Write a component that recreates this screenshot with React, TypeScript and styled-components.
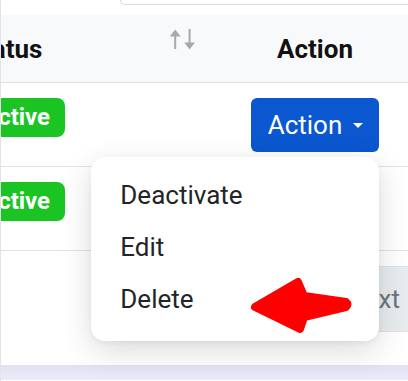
import { FC } from "react";
import styled, { createGlobalStyle } from "styled-components";

const GlobalStyle = createGlobalStyle`
  body {
    margin: 0;
    background: #ffffff;
    font-family: Roboto, "Liberation Sans", sans-serif;
  }
`;

const Frame = styled.div`
  position: relative;
  width: 408px;
  height: 381px;
  overflow: hidden;
  background: #ffffff;
  border-left: 1px solid #e3e3e3;
  box-sizing: border-box;
`;

const TopStrip = styled.div`
  height: 15px;
`;

const SearchEdge = styled.div`
  margin-left: 119px;
  height: 4px;
  border: 1px solid #dcdcdc;
  border-top: none;
  border-right: none;
  border-bottom-left-radius: 8px;
`;

const Table = styled.div`
  margin-left: -46px;
  width: 454px;
`;

const Row = styled.div<{ $head?: boolean }>`
  display: grid;
  grid-template-columns: 266px 188px;
  height: ${(p) => (p.$head ? "67px" : "83px")};
  background: ${(p) => (p.$head ? "#f8f9fa" : "#ffffff")};
  border-bottom: 1px solid #dee2e6;
`;

const HeadCell = styled.div<{ $center?: boolean }>`
  display: flex;
  align-items: center;
  justify-content: ${(p) => (p.$center ? "center" : "space-between")};
  padding: ${(p) => (p.$center ? "0" : "0 24px 0 12px")};
  font-size: 26px;
  font-weight: 700;
  color: #111111;
`;

const SortIcon = styled.svg`
  align-self: flex-start;
  margin-top: 13px;
`;

const Cell = styled.div<{ $center?: boolean }>`
  display: flex;
  align-items: flex-start;
  justify-content: ${(p) => (p.$center ? "center" : "flex-start")};
  padding: 15px 0 0 ${(p) => (p.$center ? "0" : "12px")};
`;

const Badge = styled.span`
  display: inline-block;
  height: 39px;
  line-height: 39px;
  padding: 0 15px;
  border-radius: 8px;
  background: #19c423;
  color: #ffffff;
  font-size: 24px;
  font-weight: 700;
`;

const ButtonWrap = styled.div`
  position: relative;
`;

const ActionButton = styled.button`
  display: inline-flex;
  align-items: center;
  gap: 11px;
  padding: 12px 16px 12px 17px;
  border: none;
  border-radius: 6px;
  background: #0b57d0;
  color: #ffffff;
  font-family: Roboto, "Liberation Sans", sans-serif;
  font-size: 26px;
  line-height: 30px;
  cursor: pointer;
`;

const Caret = styled.span`
  width: 0;
  height: 0;
  border-top: 5px solid #ffffff;
  border-left: 5px solid transparent;
  border-right: 5px solid transparent;
`;

const Menu = styled.div`
  position: absolute;
  z-index: 2;
  right: 0;
  top: calc(100% + 5px);
  width: 288px;
  padding: 12px 0 16px;
  background: #ffffff;
  border-radius: 14px;
  box-shadow: 0 10px 32px rgba(0, 0, 0, 0.14), 0 2px 6px rgba(0, 0, 0, 0.05);
`;

const MenuItem = styled.div`
  padding: 0 29px;
  line-height: 52px;
  font-size: 26px;
  color: #212529;
`;

const Pagination = styled.div`
  display: flex;
  justify-content: flex-end;
  padding-top: 15px;
  height: 66px;
  margin-bottom: 33px;
`;

const PageButton = styled.div`
  display: flex;
  align-items: center;
  padding: 0 8px 0 20px;
  background: #e9ecef;
  border: 1px solid #dee2e6;
  border-right: none;
  border-radius: 6px 0 0 6px;
  color: #6c757d;
  font-size: 26px;
`;

const Footer = styled.div`
  height: 15px;
  background: linear-gradient(#e1e1f5, #ebebf8);
`;

const Pointer = styled.svg`
  position: absolute;
  z-index: 3;
  left: 239px;
  top: 270px;
`;

const rows = [0, 1];

const App: FC = () => {
  return (
    <Frame>
      <GlobalStyle />
      <TopStrip>
        <SearchEdge />
      </TopStrip>

      <Table>
        <Row $head>
          <HeadCell>
            Status
            <SortIcon width="28" height="23" viewBox="0 0 28 23" fill="#a9a9a9">
              <rect x="5.2" y="5" width="2" height="16" />
              <polygon points="0.8,8.5 6.2,1.5 11.6,8.5" />
              <rect x="19.6" y="1" width="2" height="15" />
              <polygon points="15.2,14.5 20.6,21.5 26,14.5" />
            </SortIcon>
          </HeadCell>
          <HeadCell $center>Action</HeadCell>
        </Row>

        {rows.map((i) => (
          <Row key={i}>
            <Cell>
              <Badge>Active</Badge>
            </Cell>
            <Cell $center>
              <ButtonWrap>
                <ActionButton>
                  Action <Caret />
                </ActionButton>
                {i === 0 && (
                  <Menu>
                    <MenuItem>Deactivate</MenuItem>
                    <MenuItem>Edit</MenuItem>
                    <MenuItem>Delete</MenuItem>
                  </Menu>
                )}
              </ButtonWrap>
            </Cell>
          </Row>
        ))}
      </Table>

      <Pagination>
        <PageButton>Next</PageButton>
      </Pagination>
      <Footer />

      <Pointer width="120" height="75" viewBox="0 0 120 75">
        <path
          d="M15 37 L58 12 L64 26 L106 32 Q109 34.5 106 37 L64 47 L60 59 Z"
          fill="#ff0000"
          stroke="#ff0000"
          strokeWidth="8"
          strokeLinejoin="round"
        />
      </Pointer>
    </Frame>
  );
};

export default App;
